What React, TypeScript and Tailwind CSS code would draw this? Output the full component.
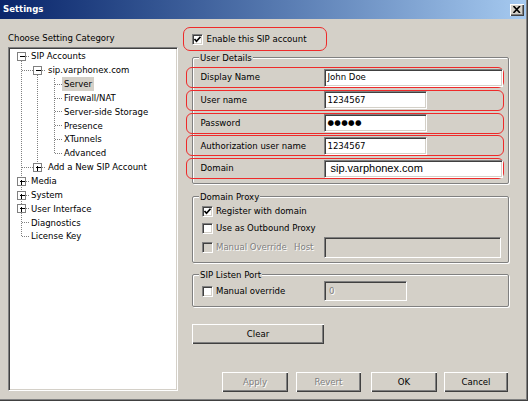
import React from 'react';

// classic win2k-ish palette
const raised =
  'shadow-[inset_1px_1px_0_#ffffff,inset_-1px_-1px_0_#404040,inset_-2px_-2px_0_#808080]';
const sunken =
  'border border-t-[#808080] border-l-[#808080] border-b-white border-r-white shadow-[inset_1px_1px_0_#404040,inset_-1px_-1px_0_#d4d0c8]';
const disabledText = 'text-[#808080] [text-shadow:1px_1px_0_#ffffff]';

type TreeRow = { label: string; level: 0 | 1 | 2; box?: '+' | '-'; selected?: boolean };

const treeRows: TreeRow[] = [
  { label: 'SIP Accounts', level: 0, box: '-' },
  { label: 'sip.varphonex.com', level: 1, box: '-' },
  { label: 'Server', level: 2, selected: true },
  { label: 'Firewall/NAT', level: 2 },
  { label: 'Server-side Storage', level: 2 },
  { label: 'Presence', level: 2 },
  { label: 'XTunnels', level: 2 },
  { label: 'Advanced', level: 2 },
  { label: 'Add a New SIP Account', level: 1, box: '+' },
  { label: 'Media', level: 0, box: '+' },
  { label: 'System', level: 0, box: '+' },
  { label: 'User Interface', level: 0, box: '+' },
  { label: 'Diagnostics', level: 0 },
  { label: 'License Key', level: 0 },
];

const ROW_H = 13.85;
const rowY = (i: number) => Math.round(7 + ROW_H * i) + 0.5;
const lineX = [11.5, 27.5, 44.5];
const textPad = ['pl-[21px]', 'pl-[38px]', 'pl-[54px]'];

function TreeLines() {
  const dot = { stroke: '#808080', strokeDasharray: '1 1', shapeRendering: 'crispEdges' as const };
  return (
    <svg className="absolute inset-0 pointer-events-none" width="100%" height="100%">
      {/* level 0 trunk */}
      <line x1={lineX[0]} y1={rowY(0)} x2={lineX[0]} y2={rowY(13)} {...dot} />
      {/* sip.varphonex.com trunk */}
      <line x1={lineX[1]} y1={rowY(1)} x2={lineX[1]} y2={rowY(8)} {...dot} />
      {/* children trunk */}
      <line x1={lineX[2]} y1={rowY(2) - 7} x2={lineX[2]} y2={rowY(7)} {...dot} />
      {treeRows.map((r, i) => {
        const y = rowY(i);
        if (r.level === 0) return <line key={i} x1={lineX[0]} y1={y} x2={19} y2={y} {...dot} />;
        if (r.level === 1) return <line key={i} x1={lineX[0]} y1={y} x2={36} y2={y} {...dot} />;
        return <line key={i} x1={lineX[2]} y1={y} x2={52} y2={y} {...dot} />;
      })}
      {treeRows.map((r, i) => {
        if (!r.box) return null;
        const cx = lineX[r.level];
        const y = rowY(i);
        return (
          <g key={'b' + i} shapeRendering="crispEdges">
            <rect x={cx - 4} y={y - 4} width={8} height={8} fill="#ffffff" stroke="#808080" />
            <line x1={cx - 2} y1={y} x2={cx + 3} y2={y} stroke="#000000" />
            {r.box === '+' && <line x1={cx} y1={y - 2} x2={cx} y2={y + 3} stroke="#000000" />}
          </g>
        );
      })}
    </svg>
  );
}

function Checkbox({ checked, disabled }: { checked?: boolean; disabled?: boolean }) {
  return (
    <span
      className={`relative w-[11px] h-[11px] shrink-0 flex items-center justify-center ${sunken} ${
        disabled ? 'bg-[#d4d0c8]' : 'bg-white'
      }`}
    >
      {checked && (
        <svg width="9" height="9" viewBox="0 0 9 9">
          <path d="M1.5 4 L3.5 6.2 L7.5 1.8" fill="none" stroke="#000" strokeWidth="1.7" />
        </svg>
      )}
    </span>
  );
}

function Field({ w, children, disabled }: { w: string; children?: React.ReactNode; disabled?: boolean }) {
  return (
    <div
      className={`${w} h-[18px] flex items-center pl-[3px] ${sunken} ${disabled ? 'bg-[#d4d0c8]' : 'bg-white'}`}
    >
      {children}
    </div>
  );
}

function Button({ w, label, disabled }: { w: string; label: string; disabled?: boolean }) {
  return (
    <div
      className={`${w} h-[20px] flex items-center justify-center bg-[#d4d0c8] ${raised} ${
        disabled ? disabledText : 'text-black'
      }`}
    >
      {label}
    </div>
  );
}

function Group({ title, className, children }: { title: string; className: string; children: React.ReactNode }) {
  return (
    <div
      className={`relative ml-[9px] w-[317px] border border-[#808080] rounded-[2px] shadow-[1px_1px_0_#ffffff,inset_1px_1px_0_#ffffff] ${className}`}
    >
      <span className="absolute -top-[7px] left-[6px] px-[1px] h-[13px] leading-[13px] bg-[#d4d0c8]">{title}</span>
      {children}
    </div>
  );
}

function MarkedRow({ label, children }: { label: string; children: React.ReactNode }) {
  return (
    <div className="-ml-[7px] mr-[4px] h-[21px] flex items-center border-[1.5px] border-[#ee2a2a] rounded-[6px] pl-[13.5px]">
      <span className="w-[123px] shrink-0">{label}</span>
      {children}
    </div>
  );
}

export default function App() {
  return (
    <div className="w-[528px] h-[401px] bg-[#d4d0c8] flex flex-col overflow-hidden whitespace-nowrap shadow-[inset_-1px_-1px_0_#404040,inset_-2px_-2px_0_#808080] [font-family:'DejaVu_Sans_Condensed','Liberation_Sans',Arial,sans-serif] text-[9.5px] text-black">
      {/* title bar */}
      <div className="mr-[2px] h-[19px] shrink-0 flex items-center justify-between pl-[3px] pr-[2px] bg-gradient-to-r from-[#0a246a] to-[#a6caf0]">
        <span className="text-white font-bold text-[9.5px]">Settings</span>
        <span className={`w-[14px] h-[12px] flex items-center justify-center bg-[#d4d0c8] ${raised}`}>
          <svg width="8" height="7" viewBox="0 0 8 7">
            <path d="M0.5 0 L7 7 M7 0 L0.5 7" stroke="#000" strokeWidth="1.6" />
          </svg>
        </span>
      </div>

      <div className="flex pl-[8px]">
        {/* category tree */}
        <div className="w-[170px] flex flex-col">
          <div className="mt-[12px] h-[13px] leading-[13px]">Choose Setting Category</div>
          <div className={`mt-[3px] h-[344px] bg-white p-[1px] ${sunken}`}>
            <div className="relative h-full">
              <TreeLines />
              {treeRows.map((r) => (
                <div key={r.label} className={`relative h-[13.85px] flex items-center ${textPad[r.level]}`}>
                  {r.selected ? (
                    <span className="-ml-[2px] px-[2px] h-[14px] leading-[14px] bg-[#d4d0c8]">{r.label}</span>
                  ) : (
                    <span className="leading-[13px]">{r.label}</span>
                  )}
                </div>
              ))}
            </div>
          </div>
        </div>

        {/* settings pane */}
        <div className="ml-[5px] w-[327px] flex flex-col">
          <div className="mt-[8px] w-[144px] h-[24px] flex items-center gap-[4px] pl-[7.5px] border-[1.5px] border-[#ee2a2a] rounded-[7px]">
            <Checkbox checked />
            <span>Enable this SIP account</span>
          </div>

          <Group title="User Details" className="mt-[6px] h-[127px] pt-[9px] flex flex-col gap-[1.75px]">
            <MarkedRow label="Display Name">
              <Field w="w-[179px]">John Doe</Field>
            </MarkedRow>
            <MarkedRow label="User name">
              <Field w="w-[103px]">1234567</Field>
            </MarkedRow>
            <MarkedRow label="Password">
              <Field w="w-[103px]">
                <span className="[font-family:'DejaVu_Sans',sans-serif] text-[7.5px] tracking-[0.3px]">●●●●●</span>
              </Field>
            </MarkedRow>
            <MarkedRow label="Authorization user name">
              <Field w="w-[103px]">1234567</Field>
            </MarkedRow>
            <MarkedRow label="Domain">
              <Field w="w-[179px]">
                <span className="[font-family:'Liberation_Sans',Arial,sans-serif] text-[11px] pl-[3px]">sip.varphonex.com</span>
              </Field>
            </MarkedRow>
          </Group>

          <Group title="Domain Proxy" className="mt-[12px] h-[67px] pt-[5.5px] pl-[9px]">
            <div className="h-[17px] flex items-center gap-[3px]">
              <Checkbox checked />
              <span>Register with domain</span>
            </div>
            <div className="h-[17px] flex items-center gap-[3px]">
              <Checkbox />
              <span>Use as Outbound Proxy</span>
            </div>
            <div className="h-[21px] flex items-center">
              <div className="w-[92px] flex items-center gap-[3px]">
                <Checkbox disabled />
                <span className={disabledText}>Manual Override</span>
              </div>
              <span className={`w-[30px] ${disabledText}`}>Host</span>
              <div className={`w-[177px] h-[21px] bg-[#d4d0c8] ${sunken}`} />
            </div>
          </Group>

          <Group title="SIP Listen Port" className="mt-[11px] h-[33px] pt-[6px] pl-[9px]">
            <div className="h-[20px] flex items-center">
              <div className="w-[122px] flex items-center gap-[3px]">
                <Checkbox />
                <span>Manual override</span>
              </div>
              <div className={`w-[83px] h-[20px] flex items-center pl-[4px] bg-[#d4d0c8] ${sunken}`}>
                <span className={disabledText}>0</span>
              </div>
            </div>
          </Group>

          <div className="mt-[17px] ml-[9px]">
            <Button w="w-[132px]" label="Clear" />
          </div>

          <div className="mt-[28px] flex">
            <div className="ml-[39px]">
              <Button w="w-[66px]" label="Apply" disabled />
            </div>
            <div className="ml-[8px]">
              <Button w="w-[65px]" label="Revert" disabled />
            </div>
            <div className="ml-[10px]">
              <Button w="w-[66px]" label="OK" />
            </div>
            <div className="ml-[7px]">
              <Button w="w-[64px]" label="Cancel" />
            </div>
          </div>
        </div>
      </div>
    </div>
  );
}
